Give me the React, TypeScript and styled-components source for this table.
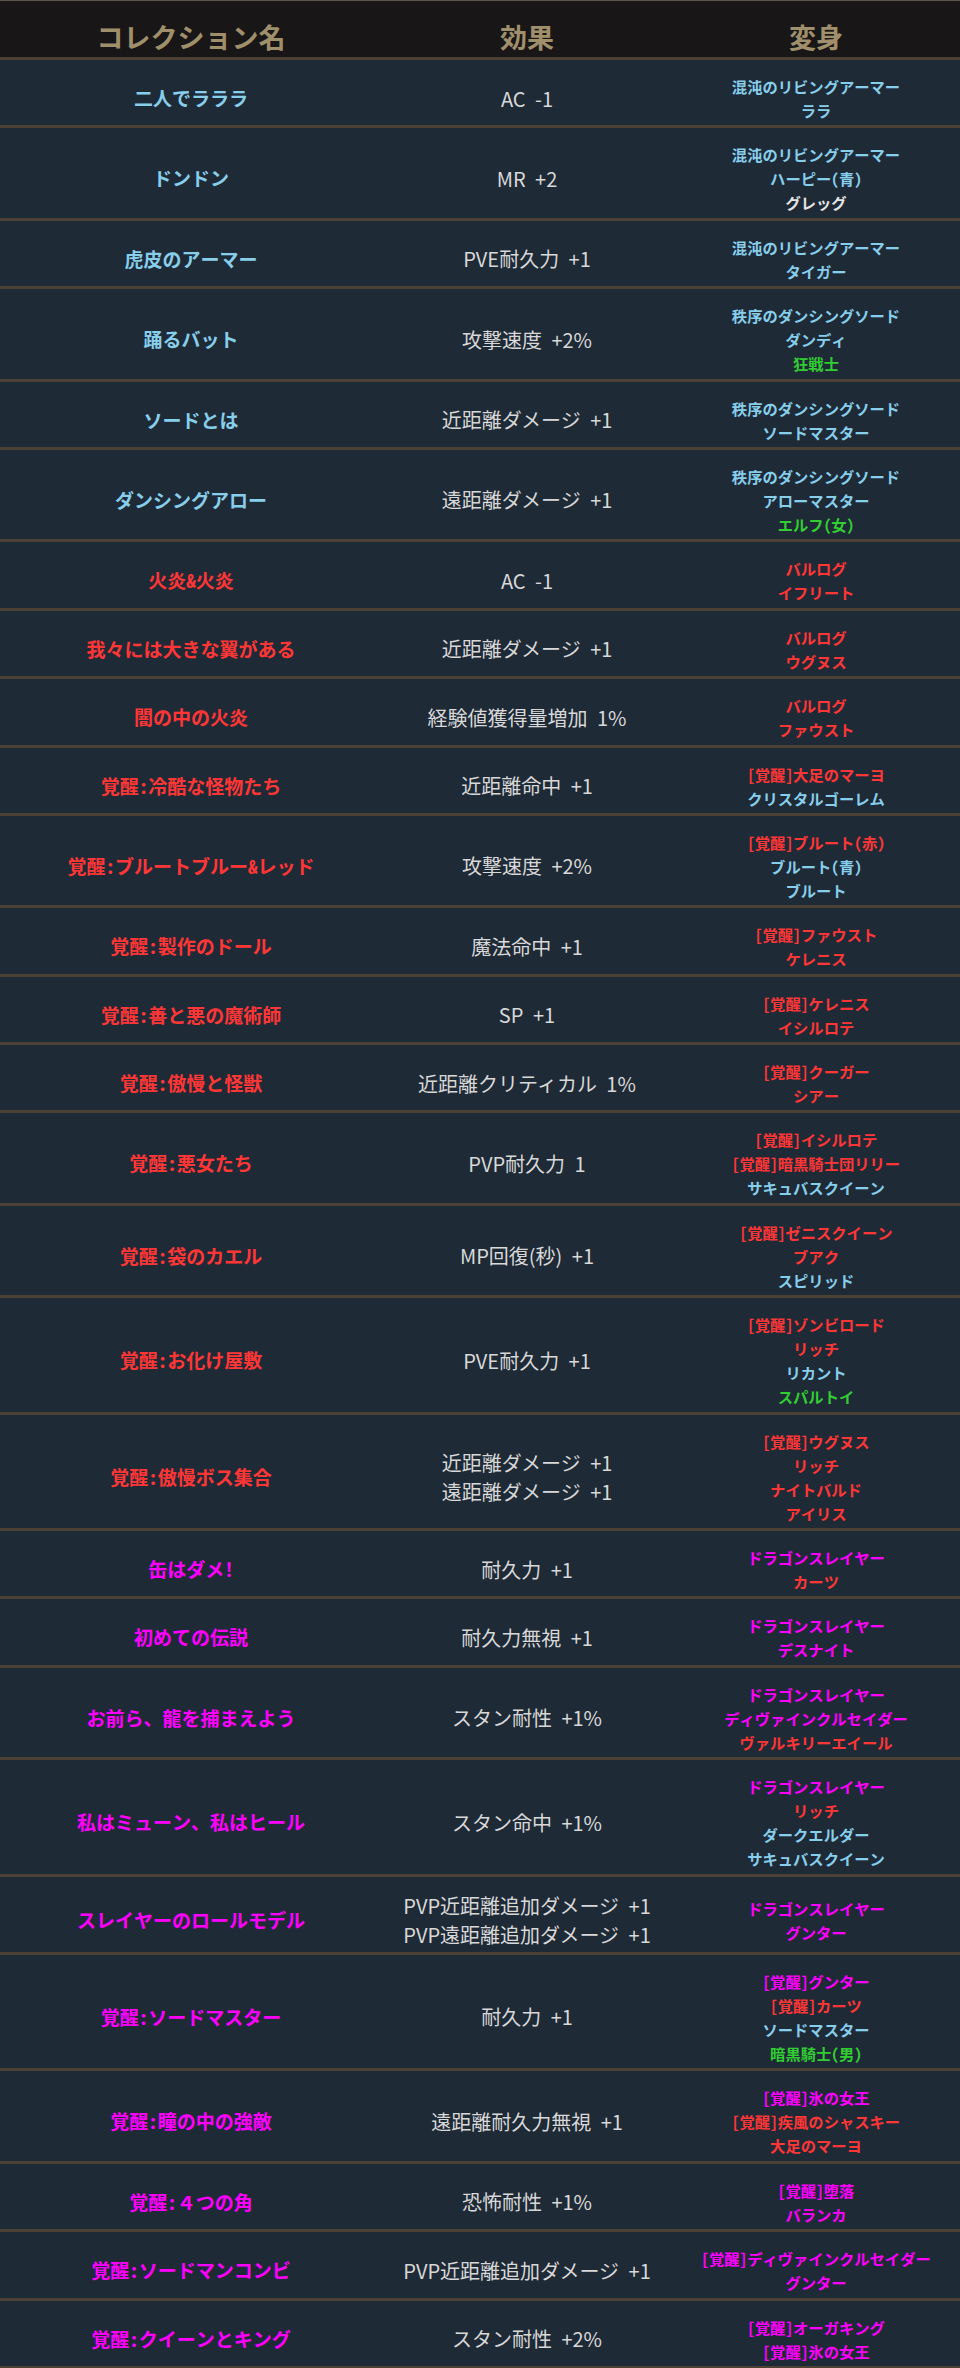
import styled, { createGlobalStyle } from 'styled-components'

const GlobalStyle = createGlobalStyle`
    html, body {
        margin: 0;
        padding: 0;
        background: #1f2a37;
    }

    body {
        font-family: "Noto Sans Mono CJK JP", "Noto Sans CJK JP", "DejaVu Sans", sans-serif;
    }
`

const Colors = {
    blue: '#87ceeb',
    red: '#ff3636',
    magenta: '#ff00ff',
    green: '#32cd32',
    white: '#e4e4e4',
}

type Tone = keyof typeof Colors

interface Collection {
    name: string
    tone: Tone
    effects: string[]
    forms: [string, Tone][]
}

const collections: Collection[] = [
    { name: '二人でラララ', tone: 'blue', effects: ['AC -1'], forms: [['混沌のリビングアーマー', 'blue'], ['ララ', 'blue']] },
    { name: 'ドンドン', tone: 'blue', effects: ['MR +2'], forms: [['混沌のリビングアーマー', 'blue'], ['ハーピー(青)', 'blue'], ['グレッグ', 'white']] },
    { name: '虎皮のアーマー', tone: 'blue', effects: ['PVE耐久力 +1'], forms: [['混沌のリビングアーマー', 'blue'], ['タイガー', 'blue']] },
    { name: '踊るバット', tone: 'blue', effects: ['攻撃速度 +2%'], forms: [['秩序のダンシングソード', 'blue'], ['ダンディ', 'blue'], ['狂戦士', 'green']] },
    { name: 'ソードとは', tone: 'blue', effects: ['近距離ダメージ +1'], forms: [['秩序のダンシングソード', 'blue'], ['ソードマスター', 'blue']] },
    { name: 'ダンシングアロー', tone: 'blue', effects: ['遠距離ダメージ +1'], forms: [['秩序のダンシングソード', 'blue'], ['アローマスター', 'blue'], ['エルフ(女)', 'green']] },
    { name: '火炎&火炎', tone: 'red', effects: ['AC -1'], forms: [['バルログ', 'red'], ['イフリート', 'red']] },
    { name: '我々には大きな翼がある', tone: 'red', effects: ['近距離ダメージ +1'], forms: [['バルログ', 'red'], ['ウグヌス', 'red']] },
    { name: '闇の中の火炎', tone: 'red', effects: ['経験値獲得量増加 1%'], forms: [['バルログ', 'red'], ['ファウスト', 'red']] },
    { name: '覚醒:冷酷な怪物たち', tone: 'red', effects: ['近距離命中 +1'], forms: [['[覚醒]大足のマーヨ', 'red'], ['クリスタルゴーレム', 'blue']] },
    { name: '覚醒:ブルートブルー&レッド', tone: 'red', effects: ['攻撃速度 +2%'], forms: [['[覚醒]ブルート(赤)', 'red'], ['ブルート(青)', 'blue'], ['ブルート', 'blue']] },
    { name: '覚醒:製作のドール', tone: 'red', effects: ['魔法命中 +1'], forms: [['[覚醒]ファウスト', 'red'], ['ケレニス', 'red']] },
    { name: '覚醒:善と悪の魔術師', tone: 'red', effects: ['SP +1'], forms: [['[覚醒]ケレニス', 'red'], ['イシルロテ', 'red']] },
    { name: '覚醒:傲慢と怪獣', tone: 'red', effects: ['近距離クリティカル 1%'], forms: [['[覚醒]クーガー', 'red'], ['シアー', 'red']] },
    { name: '覚醒:悪女たち', tone: 'red', effects: ['PVP耐久力 1'], forms: [['[覚醒]イシルロテ', 'red'], ['[覚醒]暗黒騎士団リリー', 'red'], ['サキュバスクイーン', 'blue']] },
    { name: '覚醒:袋のカエル', tone: 'red', effects: ['MP回復(秒) +1'], forms: [['[覚醒]ゼニスクイーン', 'red'], ['ブアク', 'red'], ['スピリッド', 'blue']] },
    { name: '覚醒:お化け屋敷', tone: 'red', effects: ['PVE耐久力 +1'], forms: [['[覚醒]ゾンビロード', 'red'], ['リッチ', 'red'], ['リカント', 'blue'], ['スパルトイ', 'green']] },
    { name: '覚醒:傲慢ボス集合', tone: 'red', effects: ['近距離ダメージ +1', '遠距離ダメージ +1'], forms: [['[覚醒]ウグヌス', 'red'], ['リッチ', 'red'], ['ナイトバルド', 'red'], ['アイリス', 'red']] },
    { name: '缶はダメ!', tone: 'magenta', effects: ['耐久力 +1'], forms: [['ドラゴンスレイヤー', 'magenta'], ['カーツ', 'red']] },
    { name: '初めての伝説', tone: 'magenta', effects: ['耐久力無視 +1'], forms: [['ドラゴンスレイヤー', 'magenta'], ['デスナイト', 'magenta']] },
    { name: 'お前ら、龍を捕まえよう', tone: 'magenta', effects: ['スタン耐性 +1%'], forms: [['ドラゴンスレイヤー', 'magenta'], ['ディヴァインクルセイダー', 'magenta'], ['ヴァルキリーエイール', 'red']] },
    { name: '私はミューン、私はヒール', tone: 'magenta', effects: ['スタン命中 +1%'], forms: [['ドラゴンスレイヤー', 'magenta'], ['リッチ', 'red'], ['ダークエルダー', 'blue'], ['サキュバスクイーン', 'blue']] },
    { name: 'スレイヤーのロールモデル', tone: 'magenta', effects: ['PVP近距離追加ダメージ +1', 'PVP遠距離追加ダメージ +1'], forms: [['ドラゴンスレイヤー', 'magenta'], ['グンター', 'magenta']] },
    { name: '覚醒:ソードマスター', tone: 'magenta', effects: ['耐久力 +1'], forms: [['[覚醒]グンター', 'magenta'], ['[覚醒]カーツ', 'red'], ['ソードマスター', 'blue'], ['暗黒騎士(男)', 'green']] },
    { name: '覚醒:瞳の中の強敵', tone: 'magenta', effects: ['遠距離耐久力無視 +1'], forms: [['[覚醒]氷の女王', 'magenta'], ['[覚醒]疾風のシャスキー', 'red'], ['大足のマーヨ', 'red']] },
    { name: '覚醒:４つの角', tone: 'magenta', effects: ['恐怖耐性 +1%'], forms: [['[覚醒]堕落', 'magenta'], ['バランカ', 'magenta']] },
    { name: '覚醒:ソードマンコンビ', tone: 'magenta', effects: ['PVP近距離追加ダメージ +1'], forms: [['[覚醒]ディヴァインクルセイダー', 'magenta'], ['グンター', 'magenta']] },
    { name: '覚醒:クイーンとキング', tone: 'magenta', effects: ['スタン耐性 +2%'], forms: [['[覚醒]オーガキング', 'magenta'], ['[覚醒]氷の女王', 'magenta']] },
]

const Table = styled.div`
    width: 960px;
`

const HeaderRow = styled.div`
    display: grid;
    grid-template-columns: 382px 290px 288px;
    padding: 21px 0 5px;
    background: #181616;
    border-top: 1px solid #5e5650;
    border-bottom: 3px solid #4b4134;
`

const HeaderCell = styled.div`
    text-align: center;
    font-size: 27px;
    font-weight: 700;
    line-height: 30px;
    color: #a08f6b;
`

const Row = styled.div`
    display: grid;
    grid-template-columns: 382px 290px 288px;
    align-items: center;
    padding: 14px 0 3.4px;
    background: #1f2a37;
    border-bottom: 3px solid #4b4134;
`

interface ToneProps {
    tone: Tone
}

const NameCell = styled.div<ToneProps>`
    text-align: center;
    font-size: 19px;
    font-weight: 700;
    line-height: 24px;
    color: ${(props) => Colors[props.tone]};
`

const EffectCell = styled.div`
    text-align: center;
    font-family: "Noto Sans CJK JP", "Noto Sans", sans-serif;
    font-size: 20px;
    line-height: 29px;
    word-spacing: 5px;
    color: #d8d8d8;
`

const FormList = styled.div`
    text-align: center;
    font-size: 15.3px;
    font-weight: 700;
    line-height: 24px;
`

const FormLine = styled.div<ToneProps>`
    color: ${(props) => Colors[props.tone]};
`

const App = () => {
    return (
        <Table>
            <GlobalStyle />
            <HeaderRow>
                <HeaderCell>コレクション名</HeaderCell>
                <HeaderCell>効果</HeaderCell>
                <HeaderCell>変身</HeaderCell>
            </HeaderRow>

            {
                collections.map((item, index) => (
                    <Row key={index}>
                        <NameCell tone={item.tone}>{item.name}</NameCell>
                        <EffectCell>
                            {item.effects.map((effect) => <div key={effect}>{effect}</div>)}
                        </EffectCell>
                        <FormList>
                            {
                                item.forms.map(([form, tone], i) => (
                                    <FormLine key={i} tone={tone}>{form}</FormLine>
                                ))
                            }
                        </FormList>
                    </Row>
                ))
            }
        </Table>
    )
}

export default App
